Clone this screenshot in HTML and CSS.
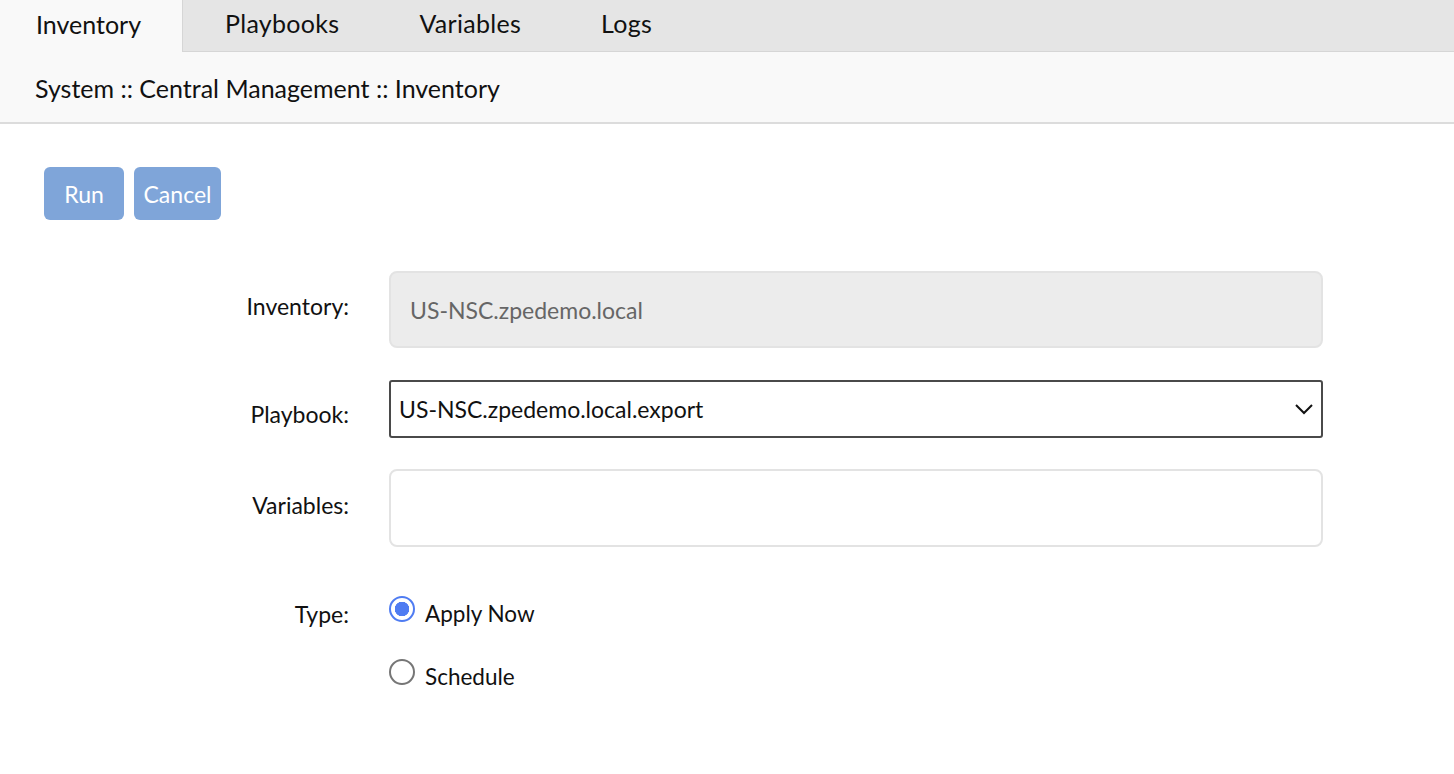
FILE: index.html
```html
<!DOCTYPE html>
<html lang="en">
<head>
<meta charset="utf-8">
<title>Inventory</title>
<link rel="stylesheet" href="styles.css">
</head>
<body>
<nav class="tabs">
  <a class="tab tab-active">Inventory</a>
  <a class="tab">Playbooks</a>
  <a class="tab">Variables</a>
  <a class="tab">Logs</a>
  <div class="tab-fill"></div>
</nav>
<div class="crumbs">System :: Central Management :: Inventory</div>
<main class="content">
  <div class="actions">
    <button class="btn btn-run">Run</button>
    <button class="btn btn-cancel">Cancel</button>
  </div>
  <form class="form">
    <label class="label label-inv">Inventory:</label>
    <div class="field field-inv">US-NSC.zpedemo.local</div>

    <label class="label label-pb">Playbook:</label>
    <div class="select">
      <span>US-NSC.zpedemo.local.export</span>
      <svg class="chev" width="20" height="12" viewBox="0 0 20 12"><path d="M2 2 L10 10 L18 2" fill="none" stroke="#111" stroke-width="2"/></svg>
    </div>

    <label class="label label-var">Variables:</label>
    <div class="field field-var"></div>

    <label class="label label-type">Type:</label>
    <div class="radios">
      <div class="radio-row"><span class="radio radio-on"></span><span class="radio-text">Apply Now</span></div>
      <div class="radio-row"><span class="radio"></span><span class="radio-text">Schedule</span></div>
    </div>
  </form>
</main>
</body>
</html>
```
FILE: styles.css
```css
html, body {
  margin: 0;
  padding: 0;
  background: #ffffff;
  font-family: "Lato", "Noto Sans", sans-serif;
  color: #111;
}
.tabs {
  display: flex;
  height: 52px;
  background: #e5e5e5;
}
.tab {
  display: flex;
  align-items: center;
  padding: 0 38px 5px 42px;
  font-size: 25px;
  letter-spacing: 0.3px;
  color: #111;
  border-bottom: 1px solid #d6d6d6;
  box-sizing: border-box;
}
.tab-active {
  background: #f9f9f9;
  padding-left: 36px;
  letter-spacing: 0;
  width: 183px;
  border-bottom: none;
  border-right: 1px solid #d6d6d6;
}
.tab-fill {
  flex: 1;
  border-bottom: 1px solid #d6d6d6;
}
.crumbs {
  height: 72px;
  background: #f9f9f9;
  border-bottom: 2px solid #dcdcdc;
  box-sizing: border-box;
  display: flex;
  align-items: center;
  padding-left: 35px;
  padding-top: 1px;
  font-size: 25px;
}
.content {
  padding-top: 43px;
}
.actions {
  display: flex;
  gap: 10px;
  padding-left: 44px;
}
.btn {
  height: 53px;
  border: none;
  border-radius: 6px;
  background: #7fa5d9;
  color: #fff;
  font-family: inherit;
  font-size: 23px;
  padding: 0;
}
.btn-run { width: 80px; }
.btn-cancel { width: 87px; }
.form {
  display: grid;
  grid-template-columns: 349px 934px;
  column-gap: 40px;
  margin-top: 51px;
  align-items: center;
}
.label {
  text-align: right;
  font-size: 23px;
}
.field {
  box-sizing: border-box;
  border: 2px solid #e3e3e3;
  border-radius: 8px;
  height: 77px;
}
.field-inv {
  background: #ececec;
  color: #666;
  font-size: 23px;
  display: flex;
  align-items: center;
  padding-left: 19px;
}
.label-inv { margin-top: -7px; }
.select {
  box-sizing: border-box;
  margin-top: 32px;
  height: 58px;
  border: 2px solid #4a4a4a;
  border-radius: 3px;
  display: flex;
  align-items: center;
  justify-content: space-between;
  padding: 0 8px 0 8px;
  font-size: 23px;
}
.chev { margin-right: -1px; }
.label-pb { margin-top: 42px; }
.field-var {
  margin-top: 31px;
  height: 78px;
}
.label-var { margin-top: 24px; }
.radios {
  margin-top: 49px;
  display: flex;
  flex-direction: column;
  gap: 37px;
}
.label-type { align-self: start; margin-top: 53px; }
.radio-row {
  display: flex;
  align-items: center;
  gap: 10px;
  font-size: 22.5px;
  height: 26px;
}
.radio-text { margin-top: 8px; }
.radio {
  width: 26px;
  height: 26px;
  box-sizing: border-box;
  border: 2px solid #767676;
  border-radius: 50%;
  display: inline-block;
}
.radio-on {
  border-color: #4f7cf2;
  background: radial-gradient(circle, #4f7cf2 0 7px, #fff 7.5px);
}
```
